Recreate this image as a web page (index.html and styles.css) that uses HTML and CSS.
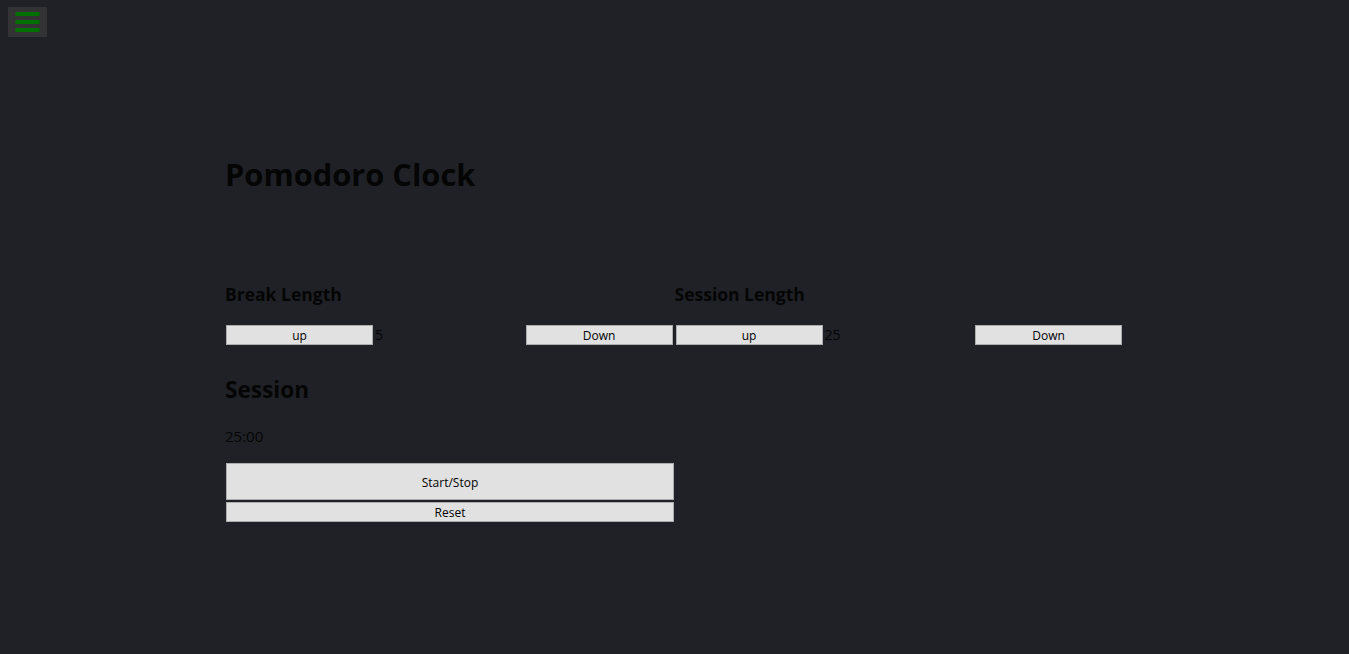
FILE: index.html
```html
<!DOCTYPE html>
<html>
<head>
<meta charset="utf-8">
<title>Pomodoro Clock</title>
<link rel="stylesheet" href="styles.css">
</head>
<body>
<div class="menu-btn">
  <span class="bar"></span>
  <span class="bar"></span>
  <span class="bar"></span>
</div>
<main class="container">
  <h1 class="title">Pomodoro Clock</h1>
  <section class="settings">
    <div class="setting">
      <h3 class="setting-label">Break Length</h3>
      <div class="controls">
        <button class="btn small">up</button>
        <span class="value">5</span>
        <button class="btn small">Down</button>
      </div>
    </div>
    <div class="setting">
      <h3 class="setting-label">Session Length</h3>
      <div class="controls">
        <button class="btn small">up</button>
        <span class="value">25</span>
        <button class="btn small">Down</button>
      </div>
    </div>
  </section>
  <section class="timer">
    <h2 class="timer-label">Session</h2>
    <div class="time">25:00</div>
    <button class="btn big">Start/Stop</button>
    <button class="btn wide">Reset</button>
  </section>
</main>
</body>
</html>
```
FILE: styles.css
```css
html, body {
  margin: 0;
  padding: 0;
  background: #202126;
  color: #050505;
  font-family: "Open Sans", "Noto Sans", sans-serif;
}
.menu-btn {
  margin: 7px 0 0 8px;
  width: 39px;
  height: 30px;
  background: #333335;
  display: flex;
  flex-direction: column;
  align-items: center;
  justify-content: center;
  gap: 4px;
}
.bar {
  display: block;
  width: 25px;
  height: 4px;
  border-radius: 2px;
  background: #007000;
}
.container {
  width: 899px;
  margin: 0 auto;
}
.title {
  margin: 116px 0 0;
  font-size: 30.8px;
  line-height: 43px;
  font-weight: 700;
}
.settings {
  display: flex;
  margin-top: 86px;
}
.setting {
  width: 450px;
}
.setting-label {
  margin: 0;
  font-size: 17.5px;
  line-height: 24px;
  font-weight: 700;
}
.controls {
  display: flex;
  align-items: center;
  margin-top: 19px;
  height: 20px;
}
.value {
  flex: 1;
  padding-left: 2px;
  font-size: 14px;
  line-height: 20px;
}
.btn {
  background: #e1e1e1;
  border: 1px solid #adadad;
  color: #000;
  font-family: "Open Sans", "Noto Sans", sans-serif;
  font-size: 12px;
  padding: 0;
  margin: 0;
  display: block;
}
.small {
  width: 147px;
  height: 20px;
  margin-left: 1px;
}
.small:last-child {
  margin-right: 2px;
}
.timer-label {
  margin: 29px 0 0;
  font-size: 22.6px;
  line-height: 32px;
  font-weight: 700;
}
.time {
  margin-top: 19px;
  font-size: 15px;
  line-height: 22px;
}
.big {
  margin-top: 16px;
  margin-left: 1px;
  width: 448px;
  height: 37px;
  padding-top: 1px;
}
.wide {
  margin-top: 2px;
  margin-left: 1px;
  width: 448px;
  height: 20px;
}
```
